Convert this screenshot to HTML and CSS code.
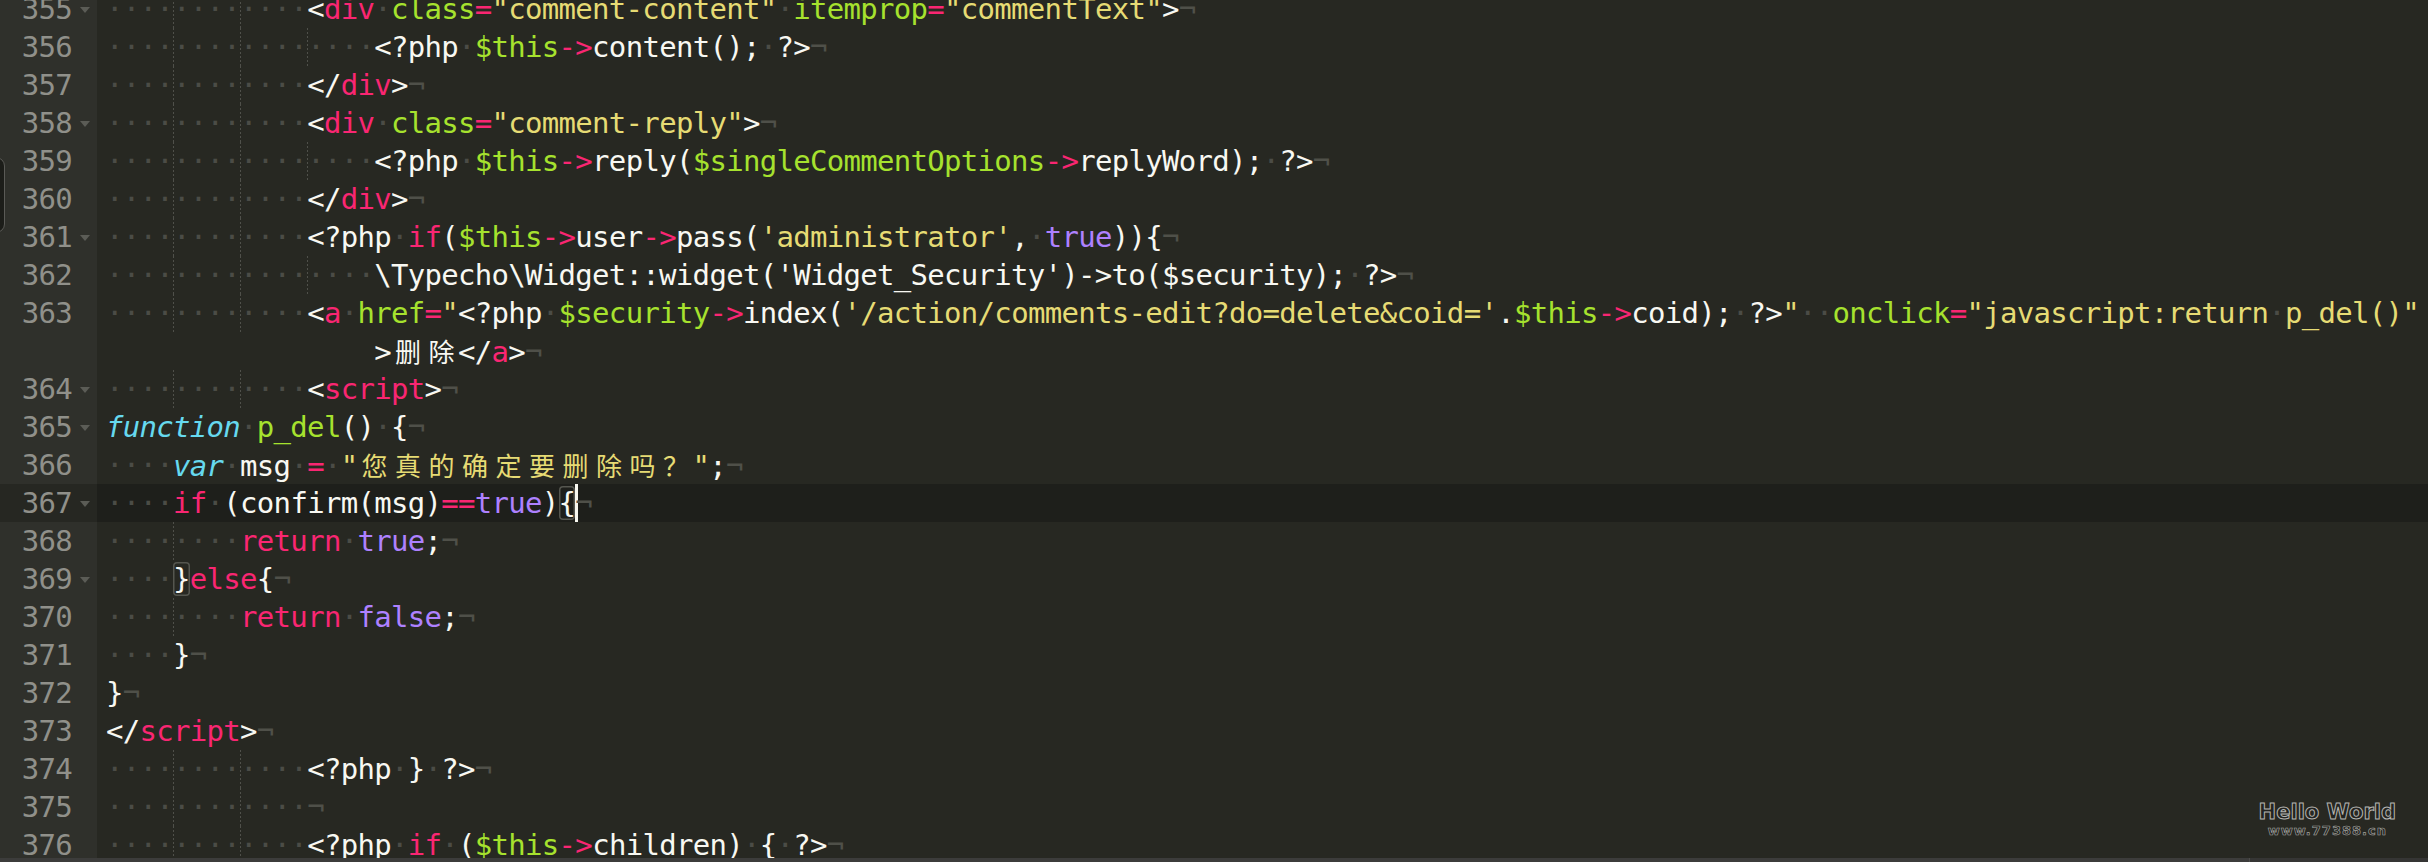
FILE: index.html
```html
<!DOCTYPE html>
<html lang="en">
<head>
  <meta charset="UTF-8" />
  <title>comments.php</title>
  <link rel="stylesheet" href="styles.css">
</head>
<body>

  <div class="editor">
    <div class="row fold"><span class="num">355</span><span class="code"><span class="ws">····</span><span class="ws g">····</span><span class="ws g">····</span>&lt;<span class="t">div</span><span class="d">·</span><span class="a">class</span><span class="o">=</span><span class="s">"comment-content"</span><span class="d">·</span><span class="a">itemprop</span><span class="o">=</span><span class="s">"commentText"</span>&gt;<span class="e">¬</span></span></div>
    <div class="row"><span class="num">356</span><span class="code"><span class="ws">····</span><span class="ws g">····</span><span class="ws g">····</span><span class="ws g">····</span>&lt;?php<span class="d">·</span><span class="v">$this</span><span class="o">-&gt;</span>content();<span class="d">·</span>?&gt;<span class="e">¬</span></span></div>
    <div class="row"><span class="num">357</span><span class="code"><span class="ws">····</span><span class="ws g">····</span><span class="ws g">····</span>&lt;/<span class="t">div</span>&gt;<span class="e">¬</span></span></div>
    <div class="row fold"><span class="num">358</span><span class="code"><span class="ws">····</span><span class="ws g">····</span><span class="ws g">····</span>&lt;<span class="t">div</span><span class="d">·</span><span class="a">class</span><span class="o">=</span><span class="s">"comment-reply"</span>&gt;<span class="e">¬</span></span></div>
    <div class="row"><span class="num">359</span><span class="code"><span class="ws">····</span><span class="ws g">····</span><span class="ws g">····</span><span class="ws g">····</span>&lt;?php<span class="d">·</span><span class="v">$this</span><span class="o">-&gt;</span>reply(<span class="v">$singleCommentOptions</span><span class="o">-&gt;</span>replyWord);<span class="d">·</span>?&gt;<span class="e">¬</span></span></div>
    <div class="row"><span class="num">360</span><span class="code"><span class="ws">····</span><span class="ws g">····</span><span class="ws g">····</span>&lt;/<span class="t">div</span>&gt;<span class="e">¬</span></span></div>
    <div class="row fold"><span class="num">361</span><span class="code"><span class="ws">····</span><span class="ws g">····</span><span class="ws g">····</span>&lt;?php<span class="d">·</span><span class="k">if</span>(<span class="v">$this</span><span class="o">-&gt;</span>user<span class="o">-&gt;</span>pass(<span class="s">'administrator'</span>,<span class="d">·</span><span class="c">true</span>)){<span class="e">¬</span></span></div>
    <div class="row"><span class="num">362</span><span class="code"><span class="ws">····</span><span class="ws g">····</span><span class="ws g">····</span><span class="ws g">····</span>\Typecho\Widget::widget('Widget_Security')-&gt;to($security);<span class="d">·</span>?&gt;<span class="e">¬</span></span></div>
    <div class="row"><span class="num">363</span><span class="code"><span class="ws">····</span><span class="ws g">····</span><span class="ws g">····</span>&lt;<span class="t">a</span><span class="d">·</span><span class="a">href</span><span class="o">=</span><span class="s">"</span>&lt;?php<span class="d">·</span><span class="v">$security</span><span class="o">-&gt;</span>index(<span class="s">'/action/comments-edit?do=delete&amp;coid='</span>.<span class="v">$this</span><span class="o">-&gt;</span>coid);<span class="d">·</span>?&gt;<span class="s">"</span><span class="d">··</span><span class="a">onclick</span><span class="o">=</span><span class="s">"javascript:return<span class="d">·</span>p_del()"</span></span></div>
    <div class="row"><span class="num"></span><span class="code">                &gt;<span class="cjk">删除</span>&lt;/<span class="t">a</span>&gt;<span class="e">¬</span></span></div>
    <div class="row fold"><span class="num">364</span><span class="code"><span class="ws">····</span><span class="ws g">····</span><span class="ws g">····</span>&lt;<span class="t">script</span>&gt;<span class="e">¬</span></span></div>
    <div class="row fold"><span class="num">365</span><span class="code"><span class="f">function</span><span class="d">·</span><span class="n">p_del</span>()<span class="d">·</span>{<span class="e">¬</span></span></div>
    <div class="row"><span class="num">366</span><span class="code"><span class="ws">····</span><span class="f">var</span><span class="d">·</span>msg<span class="d">·</span><span class="o">=</span><span class="d">·</span><span class="s">"<span class="cjk">您真的确定要删除吗？</span>"</span>;<span class="e">¬</span></span></div>
    <div class="row fold cur"><span class="num">367</span><span class="code"><span class="ws">····</span><span class="k">if</span><span class="d">·</span>(confirm(msg)<span class="o">==</span><span class="c">true</span>)<span class="match">{</span><span class="caret"></span><span class="e">¬</span></span></div>
    <div class="row"><span class="num">368</span><span class="code"><span class="ws">····</span><span class="ws g">····</span><span class="k">return</span><span class="d">·</span><span class="c">true</span>;<span class="e">¬</span></span></div>
    <div class="row fold"><span class="num">369</span><span class="code"><span class="ws">····</span><span class="match">}</span><span class="k">else</span>{<span class="e">¬</span></span></div>
    <div class="row"><span class="num">370</span><span class="code"><span class="ws">····</span><span class="ws g">····</span><span class="k">return</span><span class="d">·</span><span class="c">false</span>;<span class="e">¬</span></span></div>
    <div class="row"><span class="num">371</span><span class="code"><span class="ws">····</span>}<span class="e">¬</span></span></div>
    <div class="row"><span class="num">372</span><span class="code">}<span class="e">¬</span></span></div>
    <div class="row"><span class="num">373</span><span class="code">&lt;/<span class="t">script</span>&gt;<span class="e">¬</span></span></div>
    <div class="row"><span class="num">374</span><span class="code"><span class="ws">····</span><span class="ws g">····</span><span class="ws g">····</span>&lt;?php<span class="d">·</span>}<span class="d">·</span>?&gt;<span class="e">¬</span></span></div>
    <div class="row"><span class="num">375</span><span class="code"><span class="ws">····</span><span class="ws g">····</span><span class="ws g">····</span><span class="e">¬</span></span></div>
    <div class="row"><span class="num">376</span><span class="code"><span class="ws">····</span><span class="ws g">····</span><span class="ws g">····</span>&lt;?php<span class="d">·</span><span class="k">if</span><span class="d">·</span>(<span class="v">$this</span><span class="o">-&gt;</span>children)<span class="d">·</span>{<span class="d">·</span>?&gt;<span class="e">¬</span></span></div>
  </div>

  <div class="handle"></div>

  <div class="watermark">
    <div class="wm-title"><span class="wm-h">H</span>ello World</div>
    <div class="wm-url">www.77388.cn</div>
  </div>

  <div class="statusbar">
    <div class="status-left"></div>
    <div class="status-right"></div>
  </div>

</body>
</html>
```

FILE: styles.css
```css
body {
  margin: 0;
  height: 862px;
  overflow: hidden;
  position: relative;
  background-color: #272822;
  color: #f8f8f2;
  font-family: "DejaVu Sans Mono", monospace;
  font-size: 29px;
  letter-spacing: -0.7px;
}

.editor {
  margin-top: -10px;
}

.row {
  display: flex;
  height: 38px;
  line-height: 38px;
}

.num {
  flex: 0 0 97px;
  display: flex;
  justify-content: flex-end;
  align-items: center;
  background-color: #2f302b;
  color: #90908a;
}

.num::after {
  content: "";
  width: 10px;
  height: 6px;
  margin: 2px 7px 0 8px;
}

.fold .num::after {
  background-color: #5b5c56;
  clip-path: polygon(0 0, 100% 0, 50% 100%);
}

.code {
  flex: 1;
  padding-left: 9px;
  white-space: pre;
}

.cur .num {
  background-color: #262722;
}

.cur .code {
  background-color: #1e1f1b;
}

/* whitespace markers */
.ws, .d {
  color: #4b4c46;
}

.ws {
  display: inline-block;
  height: 38px;
  vertical-align: top;
}

.g {
  background: linear-gradient(#4f504a 50%, transparent 50%) 0 0 / 1px 4px repeat-y;
}

.e {
  color: #4f5049;
}

/* syntax */
.t, .k, .o {
  color: #f92672;
}

.a, .v, .n {
  color: #a6e22e;
}

.s {
  color: #e6db74;
}

.c {
  color: #ae81ff;
}

.f {
  color: #66d9ef;
  font-style: italic;
}

.cjk {
  font-family: "Noto Sans CJK SC", sans-serif;
  font-size: 26px;
  letter-spacing: 7.5px;
  padding-left: 4px;
  margin-right: -4px;
}

.match {
  box-shadow: inset 0 0 0 1.5px #55564f;
  border-radius: 4px;
}

.caret {
  display: inline-block;
  width: 3px;
  height: 38px;
  margin-right: -3px;
  vertical-align: top;
  background-color: #f8f8f0;
}

/* bits of the window around the editor */
.handle {
  position: absolute;
  left: -20px;
  top: 157px;
  width: 23px;
  height: 74px;
  border: 1.5px solid #5a5a56;
  border-radius: 9px;
  background-color: #1c1d19;
}

.watermark {
  position: absolute;
  right: 32px;
  bottom: 24px;
  text-align: center;
  font-family: "DejaVu Sans", sans-serif;
  font-weight: bold;
  color: #222320;
  letter-spacing: 0;
}

.wm-title {
  font-size: 21px;
  line-height: 24px;
  -webkit-text-stroke: 1px #b4b4b0;
}

.wm-h {
  text-decoration: none;
}

.wm-url {
  font-size: 13px;
  line-height: 14px;
  letter-spacing: 1px;
  -webkit-text-stroke: 0.6px #a8a8a4;
}

.statusbar {
  position: absolute;
  left: 0;
  right: 0;
  bottom: 0;
  height: 4px;
  display: flex;
}

.status-left {
  flex: 1;
  background-color: #3c3c3b;
}

.status-right {
  width: 178px;
  border-left: 1px solid #4c4c4a;
  background-color: #353534;
}
```
